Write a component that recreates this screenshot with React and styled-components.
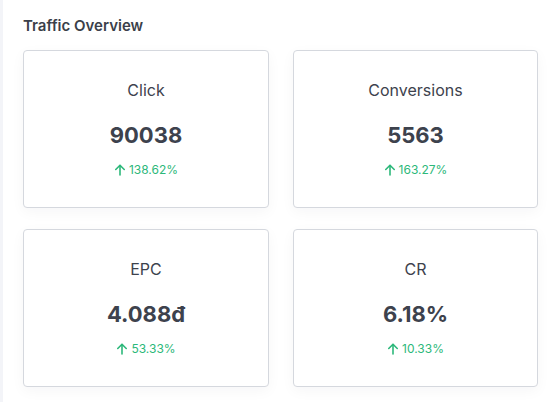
import styled, { createGlobalStyle } from 'styled-components';

const GlobalStyle = createGlobalStyle`
	html, body {
		margin: 0;
		padding: 0;
		background: #ffffff;
	}
	body {
		font-family: 'Inter', 'Liberation Sans', sans-serif;
		color: #3d424d;
	}
`;

const stats = [
	{ label: 'Click', value: '90038', change: '138.62%' },
	{ label: 'Conversions', value: '5563', change: '163.27%' },
	{ label: 'EPC', value: '4.088đ', change: '53.33%' },
	{ label: 'CR', value: '6.18%', change: '10.33%' },
];

function UpArrow() {
	return (
		<svg width="12" height="12" viewBox="0 0 24 24" fill="none" stroke="currentColor" strokeWidth="3.2" strokeLinecap="round" strokeLinejoin="round">
			<path d="M12 22V3" />
			<path d="M3.5 11L12 2.5 20.5 11" />
		</svg>
	);
}

export default function App() {
	return (
		<>
			<GlobalStyle />
			<Page>
				<Panel>
					<Title>Traffic Overview</Title>
					<Grid>
						{stats.map((s) => (
							<Card key={s.label}>
								<Label>{s.label}</Label>
								<Value>{s.value}</Value>
								<Change>
									<UpArrow />
									{s.change}
								</Change>
							</Card>
						))}
					</Grid>
				</Panel>
			</Page>
		</>
	);
}

const Page = styled.div`
	display: flex;
	min-height: 402px;
	border-left: 3px solid #f3f4f8;
	box-sizing: border-box;
`;

const Panel = styled.div`
	padding: 15px 0 0 20px;
`;

const Title = styled.div`
	font-size: 15px;
	font-weight: 600;
	line-height: 21px;
	color: #3b3f4a;
	margin-bottom: 14px;
`;

const Grid = styled.div`
	display: grid;
	grid-template-columns: 246px 245px;
	grid-auto-rows: 158px;
	column-gap: 24px;
	row-gap: 21px;
`;

const Card = styled.div`
	display: flex;
	flex-direction: column;
	align-items: center;
	justify-content: center;
	padding-bottom: 2px;
	border: 1px solid #d5d8de;
	border-radius: 4px;
	background: #ffffff;
	box-shadow: 0 4px 14px rgba(20, 30, 60, 0.04);
	box-sizing: border-box;
`;

const Label = styled.div`
	font-size: 16px;
	line-height: 24px;
	font-weight: 400;
	color: #3d424d;
`;

const Value = styled.div`
	margin-top: 17px;
	font-size: 22px;
	line-height: 32px;
	font-weight: 700;
	color: #3d424d;
`;

const Change = styled.div`
	margin-top: 10px;
	display: flex;
	align-items: center;
	gap: 3px;
	font-size: 12px;
	line-height: 18px;
	color: #2cb87a;
`;
